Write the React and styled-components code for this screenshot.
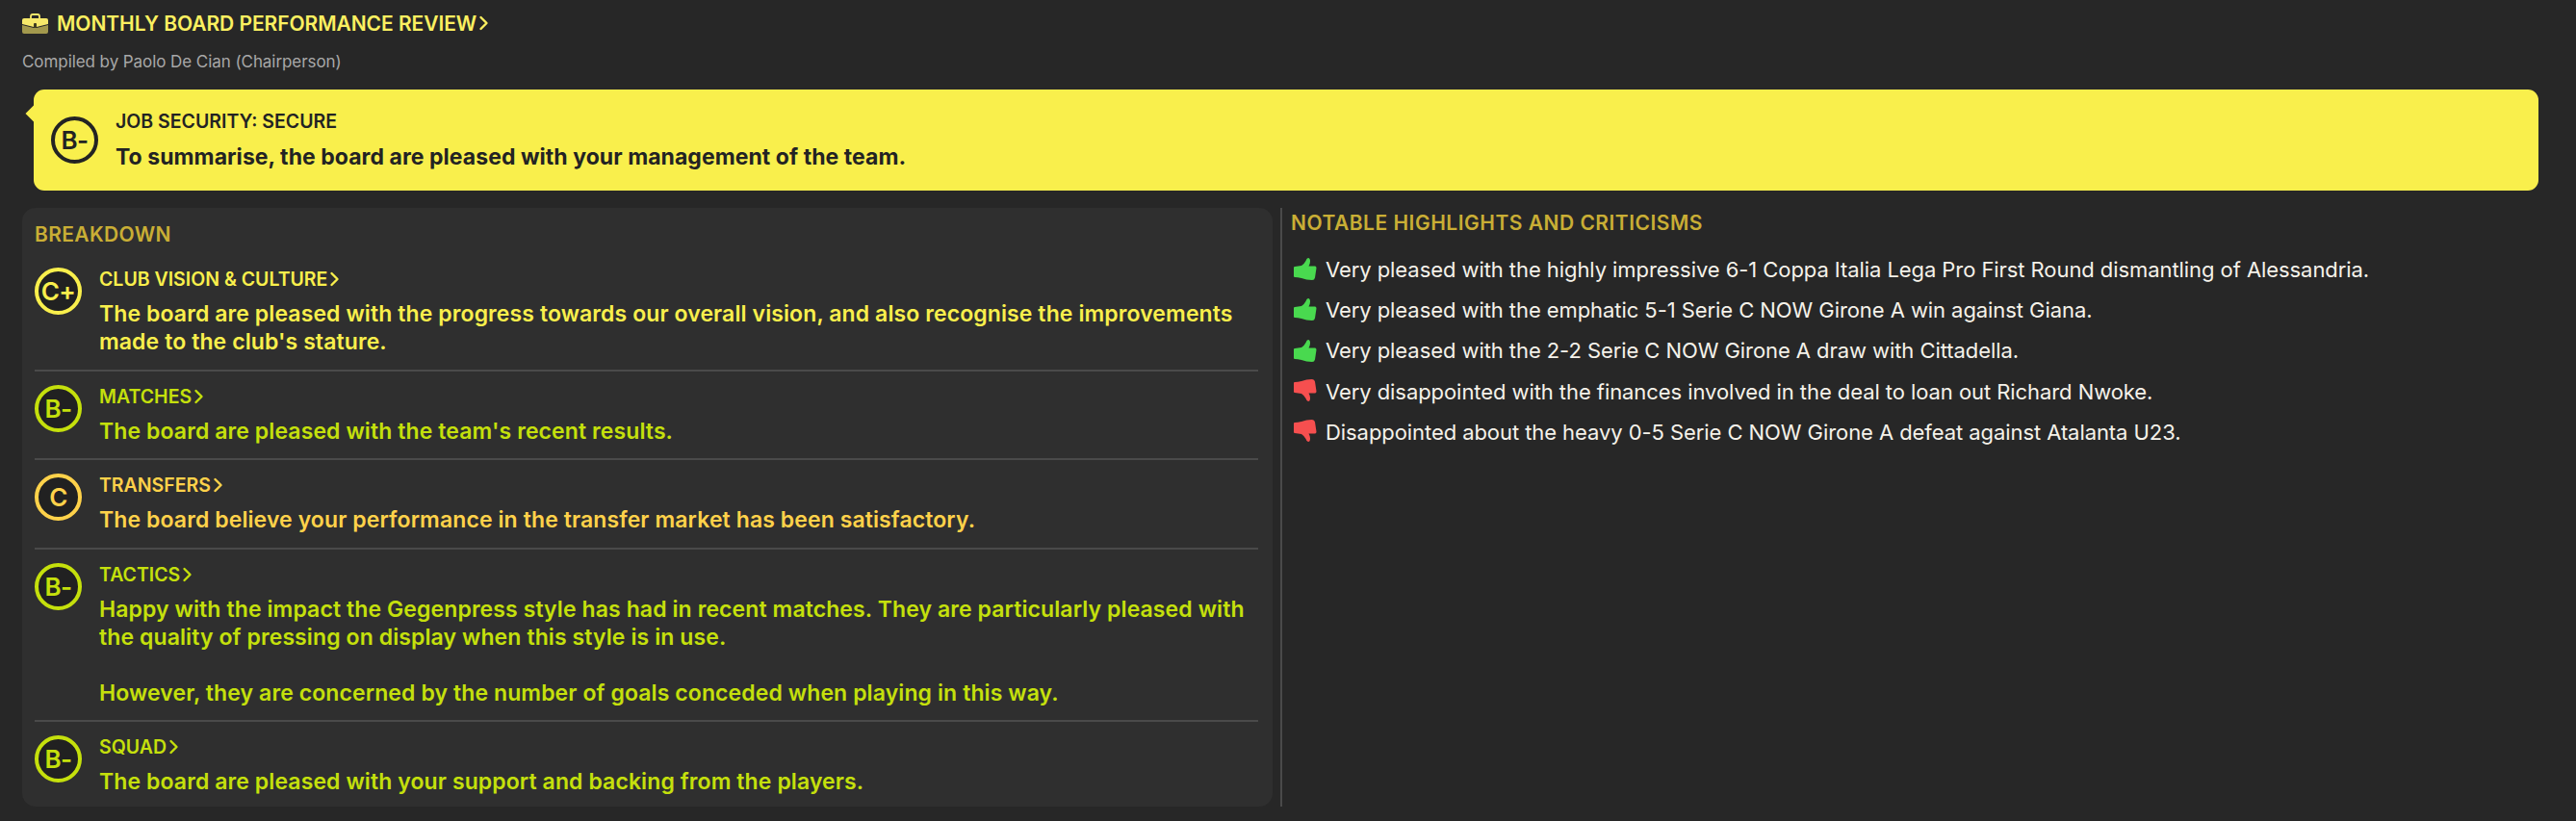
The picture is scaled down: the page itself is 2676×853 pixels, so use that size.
import React from "react";
import styled, { createGlobalStyle } from "styled-components";

const Global = createGlobalStyle`
  html, body { margin: 0; padding: 0; background: #272727; }
  body { font-family: Inter, "Noto Sans", sans-serif; }
`;

const Page = styled.div`
  width: 2676px;
  height: 853px;
  box-sizing: border-box;
  padding: 12px 0 15px 23px;
  display: flex;
  flex-direction: column;
  overflow: hidden;
`;

const TitleRow = styled.div`
  display: flex;
  align-items: center;
  height: 24px;
  gap: 9px;
  color: #fbf060;
  font-size: 21px;
  font-weight: 600;
  letter-spacing: -0.06px;
`;

const Linked = styled.span`
  display: flex;
  align-items: center;
`;

const Chevron = styled.svg`
  width: 11px;
  height: 16px;
  margin-left: 2px;
  flex: none;
`;

const Compiled = styled.div`
  margin-top: 16px;
  height: 24px;
  line-height: 24px;
  font-size: 17px;
  color: #a8a8a8;
  letter-spacing: -0.07px;
`;

const Banner = styled.div`
  position: relative;
  margin: 17px 0 0 12px;
  width: 2602px;
  height: 105px;
  box-sizing: border-box;
  background: #f9ef4c;
  border-radius: 11px;
  display: flex;
  padding: 28px 0 0 18px;
  gap: 18px;
  color: #232323;
  &::before {
    content: "";
    position: absolute;
    left: -6px;
    top: 19px;
    width: 12px;
    height: 12px;
    background: #f9ef4c;
    transform: rotate(45deg);
  }
`;

const Grade = styled.div`
  flex: none;
  width: 49px;
  height: 49px;
  box-sizing: border-box;
  border-radius: 50%;
  border: 4px solid ${(p) => p.$color};
  background: ${(p) => p.$fill || "#212121"};
  color: ${(p) => p.$color};
  display: flex;
  align-items: center;
  justify-content: center;
  font-size: 26px;
  font-weight: 600;
  letter-spacing: -0.5px;
`;

const BannerText = styled.div`
  display: flex;
  flex-direction: column;
  margin-top: -7px;
`;

const Label = styled.div`
  display: flex;
  align-items: center;
  height: 24px;
  font-size: 19.5px;
  font-weight: 600;
  color: ${(p) => p.$color || "inherit"};
`;

const BannerMain = styled.div`
  margin-top: 11px;
  line-height: 29px;
  font-size: 23px;
  font-weight: 700;
  letter-spacing: 0.05px;
`;

const Columns = styled.div`
  margin-top: 18px;
  flex: 1;
  display: flex;
  min-height: 0;
`;

const Panel = styled.section`
  width: 1299px;
  box-sizing: border-box;
  background: #2f2f2f;
  border-radius: 14px;
  padding: 15px 15px 0 13px;
`;

const Heading = styled.h2`
  margin: 0;
  height: 26px;
  line-height: 26px;
  font-size: 21px;
  font-weight: 600;
  letter-spacing: 0.35px;
  color: #c9ae35;
`;

const Row = styled.div`
  display: flex;
  gap: 18px;
  padding: 14px 0 13.5px;
  border-top: ${(p) => (p.$first ? "0" : "2px solid #4a4a4a")};
  margin-top: ${(p) => (p.$first ? "7px" : "0")};
`;

const RowText = styled.div`
  display: flex;
  flex-direction: column;
  min-width: 0;
`;

const Body = styled.div`
  margin-top: 10px;
  line-height: 29px;
  font-size: 23px;
  font-weight: 600;
  letter-spacing: 0.1px;
  white-space: nowrap;
  color: ${(p) => p.$color};
`;

const Rule = styled.div`
  width: 2px;
  background: #4a4a4a;
  margin-left: 8px;
  flex: none;
`;

const Notes = styled.section`
  padding: 2.5px 0 0 9px;
`;

const NoteHeading = styled(Heading)`
  letter-spacing: 0.5px;
`;

const NoteList = styled.ul`
  list-style: none;
  margin: 14px 0 0;
  padding: 0;
  display: flex;
  flex-direction: column;
`;

const Note = styled.li`
  display: flex;
  align-items: center;
  gap: 9px;
  height: 42.3px;
  padding-left: 2px;
  font-size: 22px;
  font-weight: 400;
  letter-spacing: -0.07px;
  color: #f5f2ea;
  white-space: nowrap;
`;

const Arrow = ({ color }) => (
  <Chevron viewBox="0 0 11 16" fill="none" stroke={color} strokeWidth="2.4" strokeLinecap="round" strokeLinejoin="round">
    <path d="M2.5 2 L8.5 8 L2.5 14" />
  </Chevron>
);

const Briefcase = () => (
  <svg width="27" height="21" viewBox="0 0 27 21" style={{ flex: "none" }}>
    <path d="M9 5 V3 Q9 1 11 1 H16 Q18 1 18 3 V5" fill="none" stroke="#f7e96a" strokeWidth="1.8" />
    <path d="M0 11 V7 Q0 5 2 5 H25 Q27 5 27 7 V11 L15 14 H12 Z" fill="#f7e96a" />
    <path d="M0 12 L12 15 H15 L27 12 V19 Q27 21 25 21 H2 Q0 21 0 19 Z" fill="#a3994d" />
    <rect x="12" y="10" width="3" height="5" rx="1" fill="#403c20" />
  </svg>
);

const Thumb = ({ down }) => (
  <svg width="25" height="25" viewBox="0 0 25 25" style={{ flex: "none", transform: down ? "scale(1,-1) translateY(1px)" : "none" }}>
    <path
      d="M1 11 Q1 10 2 10 L9 9 Q12 7 13.5 4 Q14.5 1 16 1 Q18 1 18 4.5 Q18 7 16.5 9.5 H23 Q24.5 9.5 24.5 11.5 L23 21.5 Q22.5 24 20 24 Q14 24 9 22 Q5 21 2 21 Q1 21 1 20 Z"
      fill={down ? "#f64f4f" : "#49d94f"}
    />
  </svg>
);

const YELLOW = "#f9ef4c";
const LIME = "#c5e00c";
const AMBER = "#ffd24a";

const rows = [
  { grade: "C+", color: YELLOW, title: "CLUB VISION & CULTURE", lines: ["The board are pleased with the progress towards our overall vision, and also recognise the improvements", "made to the club's stature."] },
  { grade: "B-", color: LIME, title: "MATCHES", lines: ["The board are pleased with the team's recent results."] },
  { grade: "C", color: AMBER, title: "TRANSFERS", lines: ["The board believe your performance in the transfer market has been satisfactory."] },
  { grade: "B-", color: LIME, title: "TACTICS", lines: ["Happy with the impact the Gegenpress style has had in recent matches. They are particularly pleased with", "the quality of pressing on display when this style is in use.", "\u00a0", "However, they are concerned by the number of goals conceded when playing in this way."] },
  { grade: "B-", color: LIME, title: "SQUAD", lines: ["The board are pleased with your support and backing from the players."] },
];

const notes = [
  ["up", "Very pleased with the highly impressive 6-1 Coppa Italia Lega Pro First Round dismantling of Alessandria."],
  ["up", "Very pleased with the emphatic 5-1 Serie C NOW Girone A win against Giana."],
  ["up", "Very pleased with the 2-2 Serie C NOW Girone A draw with Cittadella."],
  ["down", "Very disappointed with the finances involved in the deal to loan out Richard Nwoke."],
  ["down", "Disappointed about the heavy 0-5 Serie C NOW Girone A defeat against Atalanta U23."],
];

export default function App() {
  return (
    <Page>
      <Global />
      <TitleRow>
        <Briefcase />
        <Linked>
          MONTHLY BOARD PERFORMANCE REVIEW
          <Arrow color="#fbf060" />
        </Linked>
      </TitleRow>
      <Compiled>Compiled by Paolo De Cian (Chairperson)</Compiled>
      <Banner>
        <Grade $color="#232323" $fill="transparent">B-</Grade>
        <BannerText>
          <Label>JOB SECURITY: SECURE</Label>
          <BannerMain>To summarise, the board are pleased with your management of the team.</BannerMain>
        </BannerText>
      </Banner>
      <Columns>
        <Panel>
          <Heading>BREAKDOWN</Heading>
          {rows.map((r, i) => (
            <Row key={r.title} $first={i === 0}>
              <Grade $color={r.color}>{r.grade}</Grade>
              <RowText>
                <Label $color={r.color}>
                  {r.title}
                  <Arrow color={r.color} />
                </Label>
                <Body $color={r.color}>
                  {r.lines.map((l, j) => (
                    <div key={j}>{l}</div>
                  ))}
                </Body>
              </RowText>
            </Row>
          ))}
        </Panel>
        <Rule />
        <Notes>
          <NoteHeading>NOTABLE HIGHLIGHTS AND CRITICISMS</NoteHeading>
          <NoteList>
            {notes.map(([k, t]) => (
              <Note key={t}>
                <Thumb down={k === "down"} />
                {t}
              </Note>
            ))}
          </NoteList>
        </Notes>
      </Columns>
    </Page>
  );
}
